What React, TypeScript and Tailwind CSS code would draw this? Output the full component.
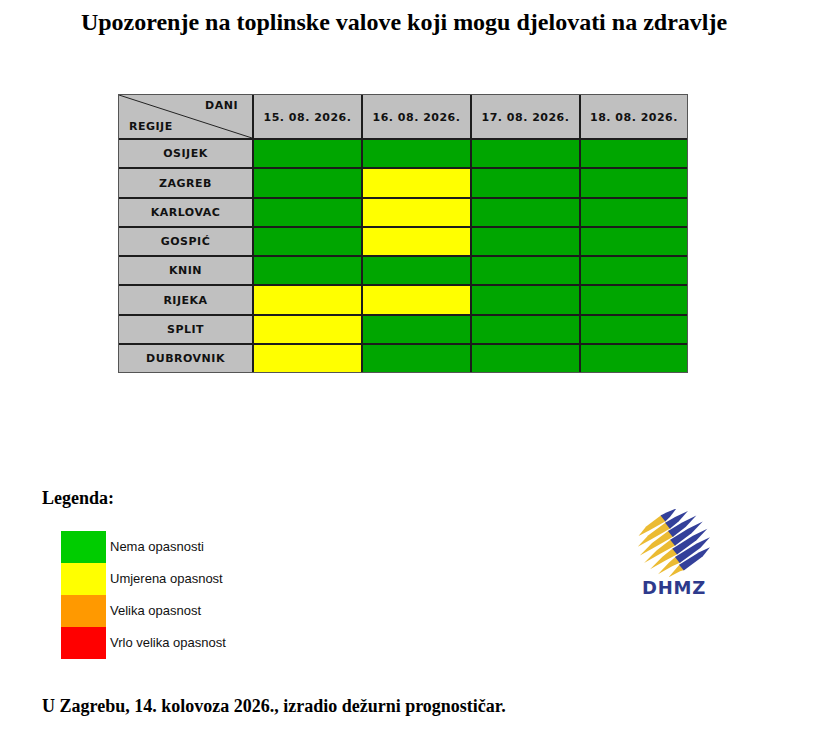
import React from 'react';

const days = ['15. 08. 2026.', '16. 08. 2026.', '17. 08. 2026.', '18. 08. 2026.'];

// 0 = nema opasnosti, 1 = umjerena
const rows: { name: string; levels: number[] }[] = [
  { name: 'OSIJEK', levels: [0, 0, 0, 0] },
  { name: 'ZAGREB', levels: [0, 1, 0, 0] },
  { name: 'KARLOVAC', levels: [0, 1, 0, 0] },
  { name: 'GOSPIĆ', levels: [0, 1, 0, 0] },
  { name: 'KNIN', levels: [0, 0, 0, 0] },
  { name: 'RIJEKA', levels: [1, 1, 0, 0] },
  { name: 'SPLIT', levels: [1, 0, 0, 0] },
  { name: 'DUBROVNIK', levels: [1, 0, 0, 0] },
];

const legend = [
  { label: 'Nema opasnosti', cls: 'bg-[#00cc00]' },
  { label: 'Umjerena opasnost', cls: 'bg-[#ffff00]' },
  { label: 'Velika opasnost', cls: 'bg-[#ff9900]' },
  { label: 'Vrlo velika opasnost', cls: 'bg-[#ff0000]' },
];

// brushed streaks, tapered at both ends, laid along a circle
function Logo() {
  const r = 37;
  const offsets = [-28, -19, -10, -1, 8, 17, 26];
  return (
    <div className="flex flex-col items-center">
      <svg width="78" height="68" viewBox="-39 -34 78 68">
        <g transform="scale(1 0.92) rotate(-36)">
          {offsets.map((y, i) => {
            const h = Math.sqrt(r * r - y * y);
            const w = 4;
            const split = -h + 2 * h * (0.5 - y * 0.006);
            const yl = `${-h},${y + 1} ${-h * 0.5},${y - w * 0.7} ${split},${y - w} ${split},${y + w} ${-h * 0.5},${y + w * 0.6}`;
            const bl = `${split - 1.5},${y - w} ${h * 0.55},${y - w * 0.8} ${h},${y - 1} ${h * 0.55},${y + w * 0.7} ${split - 1.5},${y + w}`;
            return (
              <g key={i}>
                <polygon points={yl} fill="#ebbb33" />
                <polygon points={bl} fill="#34409a" />
              </g>
            );
          })}
        </g>
      </svg>
      <div
        className="mt-[2px] text-[18px] font-bold leading-none tracking-[0.8px] text-[#2e3a8c]"
        style={{ fontFamily: '"DejaVu Sans", sans-serif' }}
      >
        DHMZ
      </div>
    </div>
  );
}

export default function App() {
  return (
    <div className="w-[818px] h-[729px] bg-white text-black overflow-hidden" style={{ fontFamily: '"Liberation Serif", serif' }}>
      <h1 className="pt-[8px] pr-[10px] text-center text-[24px] font-bold leading-[28px]">
        Upozorenje na toplinske valove koji mogu djelovati na zdravlje
      </h1>

      {/* Tablica */}
      <div
        className="ml-[118px] mt-[58px] w-[570px] grid grid-cols-[133px_107px_107px_107px_106px] grid-rows-[43px_repeat(8,27.25px)] gap-[2px] bg-[#1c1c1c] border border-[#555] text-[11px] font-bold text-[#111] tracking-[0.5px]"
        style={{ fontFamily: '"DejaVu Sans", sans-serif' }}
      >
        <div className="relative bg-[#c0c0c0]">
          <svg className="absolute inset-0" width="133" height="43">
            <line x1="0" y1="0" x2="133" y2="43" stroke="#222" strokeWidth="1" />
          </svg>
          <span className="absolute right-[14px] top-[3px]">DANI</span>
          <span className="absolute left-[10px] bottom-[3px]">REGIJE</span>
        </div>
        {days.map((d) => (
          <div key={d} className="bg-[#c0c0c0] flex items-center justify-center pt-[3px]">
            {d}
          </div>
        ))}
        {rows.map((r) => (
          <React.Fragment key={r.name}>
            <div className="bg-[#c0c0c0] flex items-center justify-center pt-[2px]">{r.name}</div>
            {r.levels.map((l, i) => (
              <div key={i} className={l === 1 ? 'bg-[#ffff00]' : 'bg-[#00a600]'} />
            ))}
          </React.Fragment>
        ))}
      </div>

      {/* Legenda i logo */}
      <div className="mt-[114px] flex items-start">
        <div className="ml-[42px]">
          <div className="text-[18px] font-bold leading-[22px]">Legenda:</div>
          <div className="mt-[22px] ml-[19px] flex flex-col">
            {legend.map((it) => (
              <div key={it.label} className="flex items-center h-[32px]">
                <div className={`w-[45px] h-[32px] ${it.cls}`} />
                <span
                  className="ml-[4px] text-[13px] text-[#111]"
                  style={{ fontFamily: '"Liberation Sans", Arial, sans-serif' }}
                >
                  {it.label}
                </span>
              </div>
            ))}
          </div>
        </div>
        <div className="ml-auto mr-[105px] mt-[22px]">
          <Logo />
        </div>
      </div>

      <p className="ml-[42px] mt-[36px] text-[18px] font-bold leading-[22px]">
        U Zagrebu, 14. kolovoza 2026., izradio dežurni prognostičar.
      </p>
    </div>
  );
}
